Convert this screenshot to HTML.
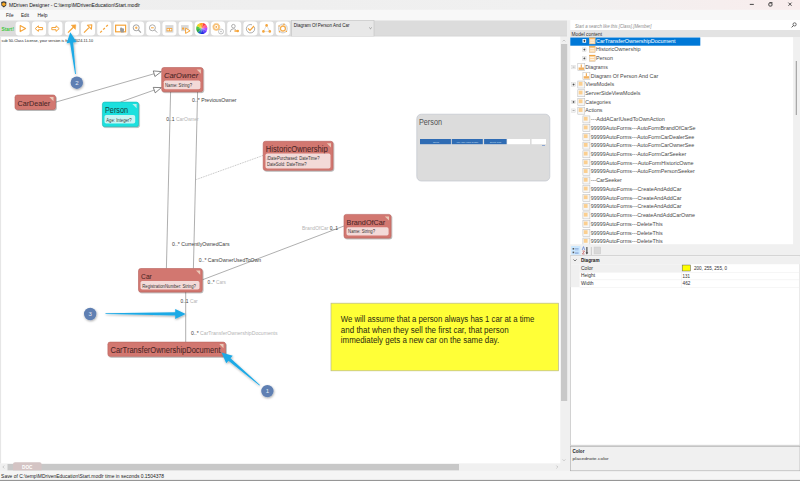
<!DOCTYPE html>
<html><head><meta charset="utf-8"><title>MDriven Designer</title>
<style>html,body{margin:0;padding:0;width:800px;height:481px;overflow:hidden;background:#f0f0f0;font-family:"Liberation Sans", sans-serif;}</style>
</head><body>
<svg width="800" height="481" viewBox="0 0 800 481" style="display:block;font-family:'Liberation Sans', sans-serif"><defs><linearGradient id="tg" x1="0" x2="1" y1="0" y2="0"><stop offset="0" stop-color="#eeeeee"/><stop offset="0.7" stop-color="#f0f0f0"/><stop offset="1" stop-color="#f9eded"/></linearGradient><filter id="sh" x="-20%" y="-20%" width="150%" height="160%"><feDropShadow dx="0.8" dy="1" stdDeviation="0.7" flood-color="#000" flood-opacity="0.35"/></filter><filter id="sh2" x="-50%" y="-50%" width="200%" height="200%"><feDropShadow dx="0.5" dy="1" stdDeviation="0.8" flood-color="#000" flood-opacity="0.35"/></filter><radialGradient id="cw" cx="0.5" cy="0.5" r="0.5"><stop offset="0" stop-color="#fff" stop-opacity="0.35"/><stop offset="1" stop-color="#fff" stop-opacity="0"/></radialGradient></defs>
<rect x="0" y="0" width="800" height="481" fill="#f0f0f0"/>
<rect x="0" y="0" width="800" height="10" fill="url(#tg)"/>
<rect x="0" y="9.8" width="800" height="10.4" fill="#f8f8f8"/>
<path d="M1.2 2 L3.8 1.2 L6.4 2 L6.2 5.5 L3.8 7.6 L1.4 5.5 Z" fill="#3a3a3a"/><circle cx="3.8" cy="4.2" r="1.8" fill="#f5a623"/>
<text x="9" y="7.3" font-size="5.4" fill="#101010" textLength="131" lengthAdjust="spacingAndGlyphs" >MDriven Designer - C:\temp\MDrivenEducation\Start.modlr</text>
<rect x="749.8" y="3.9" width="4" height="0.9" fill="#333"/>
<rect x="768.8" y="2.9" width="3.2" height="3.2" fill="none" stroke="#333" stroke-width="0.9" rx="1"/><rect x="769.6" y="2.3" width="2.9" height="0.8" fill="#333"/>
<path d="M788.4 2.6 L791.6 5.8 M791.6 2.6 L788.4 5.8" stroke="#333" stroke-width="0.85"/>
<text x="6" y="16.5" font-size="5" fill="#202020" textLength="7.5" lengthAdjust="spacingAndGlyphs" >File</text>
<text x="21" y="16.5" font-size="5" fill="#202020" textLength="8" lengthAdjust="spacingAndGlyphs" >Edit</text>
<text x="37.5" y="16.5" font-size="5" fill="#202020" textLength="10" lengthAdjust="spacingAndGlyphs" >Help</text>
<rect x="0" y="20.6" width="567" height="16" fill="#dcdcdc"/><rect x="0" y="35.4" width="567" height="1.2" fill="#d8d8d8"/>
<text x="1.5" y="30.6" font-size="4.6" fill="#3cc83c" textLength="12.5" lengthAdjust="spacingAndGlyphs" font-weight="bold">Start!</text>
<rect x="15.6" y="21.6" width="14" height="13.8" rx="3" fill="#ffffff"/>
<rect x="32" y="21.6" width="14" height="13.8" rx="3" fill="#ffffff"/>
<rect x="48.4" y="21.6" width="14" height="13.8" rx="3" fill="#ffffff"/>
<rect x="65" y="21.6" width="14" height="13.8" rx="3" fill="#ffffff"/>
<rect x="81" y="21.6" width="14" height="13.8" rx="3" fill="#ffffff"/>
<rect x="97.2" y="21.6" width="14" height="13.8" rx="3" fill="#ffffff"/>
<rect x="113.6" y="21.6" width="14" height="13.8" rx="3" fill="#ffffff"/>
<rect x="130" y="21.6" width="14" height="13.8" rx="3" fill="#ffffff"/>
<rect x="146.2" y="21.6" width="14" height="13.8" rx="3" fill="#ffffff"/>
<rect x="162.4" y="21.6" width="14" height="13.8" rx="3" fill="#ffffff"/>
<rect x="178.6" y="21.6" width="14" height="13.8" rx="3" fill="#ffffff"/>
<rect x="194.8" y="21.6" width="14" height="13.8" rx="3" fill="#ffffff"/>
<rect x="211" y="21.6" width="14" height="13.8" rx="3" fill="#ffffff"/>
<rect x="227.2" y="21.6" width="14" height="13.8" rx="3" fill="#ffffff"/>
<rect x="243.4" y="21.6" width="14" height="13.8" rx="3" fill="#ffffff"/>
<rect x="259.6" y="21.6" width="14" height="13.8" rx="3" fill="#ffffff"/>
<rect x="275.8" y="21.6" width="14" height="13.8" rx="3" fill="#ffffff"/>
<g transform="translate(15.6,21.6)"><path d="M4.6 4 L10 7 L4.6 10 Z" fill="none" stroke="#f5a43a" stroke-width="1.1" stroke-linejoin="round"/></g>
<g transform="translate(32,21.6)"><path d="M3.2 7 L6.4 4.2 L6.4 5.9 L10.6 5.9 L10.6 8.1 L6.4 8.1 L6.4 9.8 Z" fill="none" stroke="#f5a43a" stroke-width="1" stroke-linejoin="round"/></g>
<g transform="translate(48.4,21.6)"><path d="M10.8 7 L7.6 4.2 L7.6 5.9 L3.4 5.9 L3.4 8.1 L7.6 8.1 L7.6 9.8 Z" fill="none" stroke="#f5a43a" stroke-width="1" stroke-linejoin="round"/></g>
<g transform="translate(65,21.6)"><path d="M3 11 L8.6 5.4" stroke="#f5a43a" stroke-width="1.2"/><path d="M6.2 3.6 L10.8 3.2 L10.4 7.8 Z" fill="#f5a43a" stroke="#f5a43a" stroke-width="0.5" stroke-linejoin="round"/></g>
<g transform="translate(81,21.6)"><path d="M3 11 L8 6" stroke="#f5a43a" stroke-width="1.2"/><path d="M6.4 3.6 L10.8 3.2 L10.4 7.6 Z" fill="#fff" stroke="#f5a43a" stroke-width="1.1" stroke-linejoin="round"/></g>
<g transform="translate(97.2,21.6)"><path d="M3 11 L11 3" stroke="#f5a43a" stroke-width="1.3" stroke-dasharray="2.4 1.8"/></g>
<g transform="translate(113.6,21.6)"><rect x="2" y="3.6" width="10" height="6.6" fill="none" stroke="#f5a43a" stroke-width="1.2"/><path d="M6.6 6.4 L7.6 5.6 L8.4 6.6 L9.8 6.6 L10.4 7.6 L10.2 10.8 L7.4 10.8 L6.4 8.6 Z" fill="#9a9a9a"/></g>
<g transform="translate(130,21.6)"><circle cx="6.2" cy="6.2" r="3" fill="none" stroke="#a4a4a4" stroke-width="1"/><path d="M8.4 8.4 L11 11" stroke="#a4a4a4" stroke-width="1.1"/><rect x="4.9" y="5.8" width="2.6" height="0.9" fill="#f5a43a"/><rect x="5.75" y="4.9" width="0.9" height="2.6" fill="#f5a43a"/></g>
<g transform="translate(146.2,21.6)"><circle cx="6.2" cy="6.2" r="3" fill="none" stroke="#a4a4a4" stroke-width="0.9"/><path d="M8.4 8.4 L11 11" stroke="#a4a4a4" stroke-width="1"/><rect x="4.8" y="5.7" width="2.8" height="1" fill="#f5a43a"/></g>
<g transform="translate(162.4,21.6)"><rect x="3" y="3.5" width="8" height="7.5" fill="#d8d8d8"/><rect x="4.2" y="6.5" width="5.6" height="3.2" fill="#f5a43a"/><rect x="5" y="7.3" width="1.5" height="1.5" fill="#fff"/><rect x="7.5" y="7.3" width="1.5" height="1.5" fill="#fff"/></g>
<g transform="translate(178.6,21.6)"><rect x="2.5" y="3.5" width="7.5" height="6" fill="#d8d8d8"/><rect x="3.5" y="6" width="2" height="2" fill="#f5a43a"/><path d="M7 6.5 L11.5 9.2 L7 11.8 Z" fill="#fff" stroke="#f5a43a" stroke-width="1"/></g>
<g transform="translate(194.8,21.6)"><path d="M7 6.9 L7.84 1.36 A5.6 5.6 0 0 1 11.01 2.99 Z" fill="#ff3030"/><path d="M7 6.9 L10.93 2.91 A5.6 5.6 0 0 1 12.54 6.10 Z" fill="#ff4a8a"/><path d="M7 6.9 L12.52 5.98 A5.6 5.6 0 0 1 11.96 9.51 Z" fill="#b040ff"/><path d="M7 6.9 L12.01 9.41 A5.6 5.6 0 0 1 9.48 11.92 Z" fill="#5a30ff"/><path d="M7 6.9 L9.58 11.87 A5.6 5.6 0 0 1 6.05 12.42 Z" fill="#1a20e0"/><path d="M7 6.9 L6.16 12.44 A5.6 5.6 0 0 1 2.99 10.81 Z" fill="#1060c0"/><path d="M7 6.9 L3.07 10.89 A5.6 5.6 0 0 1 1.46 7.70 Z" fill="#18a040"/><path d="M7 6.9 L1.48 7.82 A5.6 5.6 0 0 1 2.04 4.29 Z" fill="#40c030"/><path d="M7 6.9 L1.99 4.39 A5.6 5.6 0 0 1 4.52 1.88 Z" fill="#f0d010"/><path d="M7 6.9 L4.42 1.93 A5.6 5.6 0 0 1 7.95 1.38 Z" fill="#ff9a10"/><circle cx="7" cy="6.9" r="5.6" fill="url(#cw)"/></g>
<g transform="translate(211,21.6)"><circle cx="5.3" cy="5.3" r="3.5" fill="#f7c27a" stroke="#f7c27a" stroke-width="0.8" stroke-dasharray="1 0.5"/><circle cx="5.3" cy="5.3" r="1.9" fill="#fff"/><circle cx="5.3" cy="5.3" r="0.9" fill="#f5a43a"/><circle cx="10" cy="9.9" r="2.5" fill="#fff" stroke="#b4b4b4" stroke-width="0.8"/><circle cx="10" cy="9.9" r="0.8" fill="#b4b4b4"/></g>
<g transform="translate(227.2,21.6)"><circle cx="6.2" cy="4.6" r="1.8" fill="none" stroke="#a4a4a4" stroke-width="0.9"/><path d="M3 10.5 Q3.2 7.2 6.2 7.2 Q8 7.2 8.6 8.2" fill="none" stroke="#a4a4a4" stroke-width="0.9"/><rect x="7" y="8.6" width="4" height="1.6" rx="0.8" fill="#f5a43a"/><circle cx="10.6" cy="9.4" r="1.2" fill="#f5a43a"/></g>
<g transform="translate(243.4,21.6)"><path d="M11 5.5 A4.2 4.2 0 1 1 8.6 3.2" fill="none" stroke="#a4a4a4" stroke-width="0.9"/><path d="M4.6 6.8 L6.6 8.8 L10.6 4.4" fill="none" stroke="#f5a43a" stroke-width="1.2"/></g>
<g transform="translate(259.6,21.6)"><path d="M7 3.8 L3.8 9.8 L10.2 9.8 Z" fill="none" stroke="#cccccc" stroke-width="0.6"/><circle cx="7" cy="3.8" r="1.3" fill="#f5a43a"/><circle cx="3.8" cy="9.8" r="1.3" fill="#f5a43a"/><circle cx="10.2" cy="9.8" r="1.3" fill="#f5a43a"/></g>
<g transform="translate(275.8,21.6)"><circle cx="7.1" cy="6.9" r="4.3" fill="none" stroke="#d4d4d4" stroke-width="1.3"/><circle cx="7.1" cy="6.9" r="2.5" fill="none" stroke="#f5a43a" stroke-width="1.3" opacity="0.9"/><circle cx="8.2" cy="2.6" r="0.8" fill="#f5a43a"/><circle cx="3.2" cy="4.4" r="0.7" fill="#f5a43a"/><circle cx="3.6" cy="10.2" r="0.7" fill="#f5a43a"/><circle cx="10.6" cy="9.8" r="0.7" fill="#f5a43a"/></g>
<rect x="291.5" y="20.5" width="82.5" height="16" fill="#e8e8e8" stroke="#c4c4c4" stroke-width="0.6"/>
<text x="293.8" y="27.2" font-size="4.5" fill="#222" textLength="55.6" lengthAdjust="spacingAndGlyphs" >Diagram Of Person And Car</text>
<path d="M369.3 27.6 L370.5 28.7 L371.7 27.6" fill="none" stroke="#444" stroke-width="0.5"/>
<rect x="0" y="36.6" width="560.5" height="427" fill="#ffffff"/>
<rect x="0" y="36.6" width="1.1" height="427" fill="#e6e6e6"/>
<text x="1.5" y="41.8" font-size="4.2" fill="#222" textLength="91.5" lengthAdjust="spacingAndGlyphs" >sub 50-Class License, your version is from 2024-11-10</text>
<g stroke="#8c8c8c" stroke-width="0.7" fill="none">
<line x1="55.5" y1="102.2" x2="154" y2="73.8"/>
<line x1="120.5" y1="102" x2="154.4" y2="90"/>
<line x1="170.6" y1="91.8" x2="166.4" y2="268.5"/>
<line x1="197.6" y1="91.8" x2="193.4" y2="268.5"/>
<line x1="263" y1="155.5" x2="196.3" y2="179.5" stroke="#a8a8a8" stroke-dasharray="1 0.8"/>
<line x1="202.4" y1="279.8" x2="344" y2="226"/>
<line x1="185.7" y1="292" x2="185.7" y2="342"/>
</g>
<path d="M161.4 71.6 L154.90 76.50 L153.29 70.92 Z" fill="#fff" stroke="#505050" stroke-width="0.7" stroke-linejoin="miter"/>
<path d="M161.4 87.6 L155.19 92.86 L153.27 87.39 Z" fill="#fff" stroke="#505050" stroke-width="0.7" stroke-linejoin="miter"/>
<g><rect x="161.7" y="67.5" width="41.20" height="24.20" rx="2.2" fill="#d27770" stroke="#b8625c" stroke-width="0.6" filter="url(#sh)"/><path d="M196.70 69.5 L200.90 69.5 L200.90 73.70 Z" fill="#ebc9b8"/><text x="164.0" y="78.3" font-size="8.0" fill="#4a2626" textLength="34.2" lengthAdjust="spacingAndGlyphs" font-style="italic" stroke="#4a2626" stroke-width="0.06">CarOwner</text><rect x="163.8" y="80.4" width="36.60" height="8.80" rx="1.8" fill="#f3dad8"/><text x="165" y="86.7" font-size="4.9" fill="#333333" textLength="27" lengthAdjust="spacingAndGlyphs" >Name: String?</text></g>
<g><rect x="102.4" y="102.1" width="36.20" height="24.50" rx="2.2" fill="#1fe0de" stroke="#16b8b6" stroke-width="0.6" filter="url(#sh)"/><path d="M132.40 104.1 L136.60 104.1 L136.60 108.30 Z" fill="#b8f0ee"/><text x="105.0" y="113" font-size="8.2" fill="#1a4848" textLength="23.1" lengthAdjust="spacingAndGlyphs"  stroke="#1a4848" stroke-width="0.06">Person</text><rect x="104.5" y="115" width="30.70" height="8.60" rx="1.8" fill="#c8f4f3"/><text x="106.3" y="121.5" font-size="4.9" fill="#333333" textLength="25.3" lengthAdjust="spacingAndGlyphs" >Age: Integer?</text></g>
<g><rect x="15" y="95" width="40.50" height="14.50" rx="2.2" fill="#d27770" stroke="#b8625c" stroke-width="0.6" filter="url(#sh)"/><path d="M49.30 97 L53.50 97 L53.50 101.20 Z" fill="#ebc9b8"/><text x="17.6" y="105.5" font-size="8.1" fill="#4a2626" textLength="32.5" lengthAdjust="spacingAndGlyphs"  stroke="#4a2626" stroke-width="0.06">CarDealer</text></g>
<g><rect x="263.2" y="141.3" width="69.80" height="29.00" rx="2.2" fill="#d27770" stroke="#b8625c" stroke-width="0.6" filter="url(#sh)"/><path d="M326.80 143.3 L331.00 143.3 L331.00 147.50 Z" fill="#ebc9b8"/><text x="265.8" y="152.1" font-size="8.6" fill="#4a2626" textLength="61.9" lengthAdjust="spacingAndGlyphs"  stroke="#4a2626" stroke-width="0.06">HistoricOwnership</text><rect x="265.5" y="153.5" width="65.00" height="15.00" rx="1.8" fill="#f3dad8"/><text x="266.9" y="160.3" font-size="4.9" fill="#333333" textLength="52.6" lengthAdjust="spacingAndGlyphs" >/DatePurchased: DateTime?</text><text x="266.9" y="166.0" font-size="4.9" fill="#333333" textLength="39.8" lengthAdjust="spacingAndGlyphs" >DateSold: DateTime?</text></g>
<g><rect x="344" y="214.4" width="47.00" height="23.70" rx="2.2" fill="#d27770" stroke="#b8625c" stroke-width="0.6" filter="url(#sh)"/><path d="M384.80 216.4 L389.00 216.4 L389.00 220.60 Z" fill="#ebc9b8"/><text x="346.6" y="225.3" font-size="8.0" fill="#4a2626" textLength="38.6" lengthAdjust="spacingAndGlyphs"  stroke="#4a2626" stroke-width="0.06">BrandOfCar</text><rect x="346.5" y="227.2" width="42.10" height="8.40" rx="1.8" fill="#f3dad8"/><text x="348.1" y="232.8" font-size="4.9" fill="#333333" textLength="26.9" lengthAdjust="spacingAndGlyphs" >Name: String?</text></g>
<g><rect x="138.5" y="268.5" width="63.70" height="23.50" rx="2.2" fill="#d27770" stroke="#b8625c" stroke-width="0.6" filter="url(#sh)"/><path d="M196.00 270.5 L200.20 270.5 L200.20 274.70 Z" fill="#ebc9b8"/><text x="141.1" y="279" font-size="7.9" fill="#4a2626" textLength="10.7" lengthAdjust="spacingAndGlyphs"  stroke="#4a2626" stroke-width="0.06">Car</text><rect x="140.5" y="281" width="59.00" height="8.50" rx="1.8" fill="#f3dad8"/><text x="142.2" y="287.5" font-size="4.9" fill="#333333" textLength="53.8" lengthAdjust="spacingAndGlyphs" >RegistrationNumber: String?</text></g>
<g><rect x="107.9" y="342.1" width="117.60" height="14.20" rx="2.2" fill="#d27770" stroke="#b8625c" stroke-width="0.6" filter="url(#sh)"/><path d="M219.30 344.1 L223.50 344.1 L223.50 348.30 Z" fill="#ebc9b8"/><text x="110.5" y="352.6" font-size="8.3" fill="#4a2626" textLength="110" lengthAdjust="spacingAndGlyphs"  stroke="#4a2626" stroke-width="0.06">CarTransferOwnershipDocument</text></g>
<text x="192" y="102" font-size="5" textLength="44.5" lengthAdjust="spacingAndGlyphs"><tspan fill="#3a3a3a">0..* </tspan><tspan fill="#3a3a3a">PreviousOwner</tspan></text>
<text x="166.2" y="121" font-size="5" textLength="32.6" lengthAdjust="spacingAndGlyphs"><tspan fill="#3a3a3a">0..1 </tspan><tspan fill="#b4b4b4">CarOwner</tspan></text>
<text x="172.1" y="246.2" font-size="5" textLength="57.4" lengthAdjust="spacingAndGlyphs"><tspan fill="#3a3a3a">0..* </tspan><tspan fill="#3a3a3a">CurrentlyOwnedCars</tspan></text>
<text x="198.8" y="262" font-size="5" textLength="62.2" lengthAdjust="spacingAndGlyphs"><tspan fill="#3a3a3a">0..* </tspan><tspan fill="#3a3a3a">CarsOwnerUsedToOwn</tspan></text>
<text x="207.5" y="284.3" font-size="5" textLength="18.5" lengthAdjust="spacingAndGlyphs"><tspan fill="#3a3a3a">0..* </tspan><tspan fill="#b4b4b4">Cars</tspan></text>
<text x="302" y="229.9" font-size="5" textLength="36" lengthAdjust="spacingAndGlyphs"><tspan fill="#b4b4b4">BrandOfCar </tspan><tspan fill="#3a3a3a">0..1</tspan></text>
<text x="180.5" y="302.5" font-size="5" textLength="17.2" lengthAdjust="spacingAndGlyphs"><tspan fill="#3a3a3a">0..1 </tspan><tspan fill="#b4b4b4">Car</tspan></text>
<text x="191" y="335.2" font-size="5" textLength="86.6" lengthAdjust="spacingAndGlyphs"><tspan fill="#3a3a3a">0..* </tspan><tspan fill="#b4b4b4">CarTransferOwnershipDocuments</tspan></text>
<rect x="416.8" y="114.2" width="133" height="66.8" rx="4.5" fill="#dcdcdc" stroke="#c2c6cf" stroke-width="0.7"/>
<text x="419" y="124.9" font-size="8.2" fill="#505050" textLength="23" lengthAdjust="spacingAndGlyphs" >Person</text>
<rect x="420" y="139" width="30.90" height="5.2" fill="#2f6cb4"/>
<rect x="451.8" y="139" width="31.00" height="5.2" fill="#2f6cb4"/>
<rect x="484.1" y="139" width="22.50" height="5.2" fill="#2f6cb4"/>
<rect x="507.2" y="139" width="22.8" height="5.2" fill="#fff"/>
<rect x="531.6" y="139" width="14.4" height="5.2" fill="#fff"/>
<text x="433" y="142.6" font-size="1.8" fill="#cfe0f5" textLength="6" lengthAdjust="spacingAndGlyphs" >Seek</text>
<text x="456" y="142.6" font-size="1.8" fill="#cfe0f5" textLength="22" lengthAdjust="spacingAndGlyphs" >Add A Car I Used To Own</text>
<text x="490" y="142.6" font-size="1.8" fill="#cfe0f5" textLength="11" lengthAdjust="spacingAndGlyphs" >Delete This</text>
<rect x="542" y="145.2" width="3" height="0.8" fill="#7a9ad0"/>
<rect x="331" y="303.2" width="227.4" height="67.6" fill="#ffff37" stroke="#b9b98a" stroke-width="0.7"/>
<text x="340.8" y="322" font-size="8.3" fill="#2a2a10" textLength="193.6" lengthAdjust="spacingAndGlyphs" >We will assume that a person always has 1 car at a time</text>
<text x="340.8" y="332.5" font-size="8.3" fill="#2a2a10" textLength="167.8" lengthAdjust="spacingAndGlyphs" >and that when they sell the first car, that person</text>
<text x="340.8" y="343.1" font-size="8.3" fill="#2a2a10" textLength="158.4" lengthAdjust="spacingAndGlyphs" >immediately gets a new car on the same day.</text>
<path d="M75.90 73.95 L73.18 42.42 L76.56 42.00 L70.30 32.20 L66.63 43.24 L70.01 42.82 L75.10 74.05 Z" fill="#1eaae6" filter="url(#sh2)"/>
<path d="M105.50 314.10 L175.19 315.56 L175.18 318.96 L185.70 314.00 L175.22 308.96 L175.21 312.36 L105.50 313.30 Z" fill="#1eaae6" filter="url(#sh2)"/>
<path d="M259.96 385.00 L230.52 358.21 L232.73 355.63 L221.50 352.60 L226.23 363.23 L228.44 360.64 L259.44 385.60 Z" fill="#1eaae6" filter="url(#sh2)"/>
<circle cx="76.8" cy="82.7" r="6.2" fill="#5e7fb2" filter="url(#sh2)"/>
<text x="75.2" y="84.9" font-size="6.2" fill="#e4eaf4" textLength="3.4" lengthAdjust="spacingAndGlyphs" >2</text>
<circle cx="90.2" cy="314" r="6.2" fill="#5e7fb2" filter="url(#sh2)"/>
<text x="88.60000000000001" y="316.2" font-size="6.2" fill="#e4eaf4" textLength="3.4" lengthAdjust="spacingAndGlyphs" >3</text>
<circle cx="267.4" cy="391.1" r="6.2" fill="#5e7fb2" filter="url(#sh2)"/>
<text x="265.79999999999995" y="393.3" font-size="6.2" fill="#e4eaf4" textLength="3.4" lengthAdjust="spacingAndGlyphs" >1</text>
<rect x="560.5" y="36.6" width="7" height="427.2" fill="#f0f0f0"/>
<rect x="561" y="44" width="6.2" height="357" fill="#c8c8c8"/>
<path d="M562.6 41.4 L564 40 L565.4 41.4" fill="none" stroke="#a0a0a0" stroke-width="0.5"/>
<path d="M562.6 459.4 L564 460.8 L565.4 459.4" fill="none" stroke="#a0a0a0" stroke-width="0.5"/>
<rect x="0" y="463.6" width="560.5" height="7" fill="#f0f0f0"/>
<rect x="7.5" y="464" width="451.5" height="6.4" fill="#c8c8c8"/>
<path d="M4.2 465.6 L2.8 467 L4.2 468.4" fill="none" stroke="#a0a0a0" stroke-width="0.5"/>
<path d="M556.4 465.6 L557.8 467 L556.4 468.4" fill="none" stroke="#a0a0a0" stroke-width="0.5"/>
<path d="M13 470.4 L13 464.2 Q13 462.2 15 462.2 L39.6 462.2 Q41.6 462.2 41.6 464.2 L41.6 470.4 Z" fill="#d4c4c4"/>
<text x="22" y="468.7" font-size="4.8" fill="#ffffff" textLength="10.4" lengthAdjust="spacingAndGlyphs" font-weight="bold">DOC</text>
<rect x="0" y="470.8" width="800" height="9.2" fill="#f5f5f5"/>
<text x="1.1" y="477.6" font-size="4.9" fill="#202020" textLength="163" lengthAdjust="spacingAndGlyphs" >Save of C:\temp\MDrivenEducation\Start.modlr time in seconds 0.1504378</text>
<rect x="0" y="479.9" width="800" height="1.1" fill="#969696"/>
<rect x="570.3" y="20" width="229.7" height="10" fill="#ffffff"/>
<text x="574.9" y="27.6" font-size="4.8" fill="#8c8c8c" textLength="76.6" lengthAdjust="spacingAndGlyphs" font-style="italic">Start a search like this [Class].[Member]</text>
<circle cx="794.6" cy="24.4" r="1.6" fill="none" stroke="#333" stroke-width="0.7"/><path d="M793.4 25.6 L791.6 27.4" stroke="#333" stroke-width="0.8"/>
<rect x="570.3" y="30" width="229.7" height="7.2" fill="#e3e3e3"/>
<text x="571.5" y="35.5" font-size="4.85" fill="#303030" textLength="30.5" lengthAdjust="spacingAndGlyphs" >Model content</text>
<rect x="570.3" y="37.2" width="222.9" height="207" fill="#ffffff"/>
<rect x="793.2" y="37.2" width="6.8" height="207" fill="#f0f0f0"/>
<rect x="795.8" y="61" width="0.9" height="54" fill="#8a8a8a"/>
<rect x="570.3" y="37.5" width="130" height="8.2" fill="#0078d7"/>
<g>
<clipPath id="treeclip"><rect x="570.3" y="37.2" width="222.9" height="207"/></clipPath>
<g clip-path="url(#treeclip)">
<rect x="582.50" y="39.10" width="3.6" height="3.6" fill="#fff"/><rect x="583.20" y="40.60" width="2.2" height="0.6" fill="#000"/><rect x="584.00" y="39.80" width="0.6" height="2.2" fill="#000"/>
<rect x="589.2" y="37.60" width="6" height="6.4" fill="#fbd7a6" stroke="#c8b8a8" stroke-width="0.4"/><rect x="589.2" y="37.60" width="6" height="1" fill="#f2a23c"/><rect x="590.20" y="39.70" width="4" height="0.7" fill="#fff"/><rect x="590.20" y="41.80" width="4" height="0.7" fill="#fff"/>
<text x="596" y="42.6" font-size="6.1" fill="#ffffff" textLength="79.6" lengthAdjust="spacingAndGlyphs" >CarTransferOwnershipDocument</text>
<rect x="582.50" y="47.83" width="3.6" height="3.6" fill="#ececec" stroke="#d0d0d0" stroke-width="0.4"/><rect x="583.30" y="49.33" width="2" height="0.6" fill="#333"/><rect x="584.00" y="48.62" width="0.6" height="2" fill="#333"/>
<rect x="589.2" y="46.33" width="6" height="6.4" fill="#fbd7a6" stroke="#c8b8a8" stroke-width="0.4"/><rect x="589.2" y="46.33" width="6" height="1" fill="#f2a23c"/><rect x="590.20" y="48.42" width="4" height="0.7" fill="#fff"/><rect x="590.20" y="50.52" width="4" height="0.7" fill="#fff"/>
<text x="596" y="51.325" font-size="6.1" fill="#484848" textLength="44.5" lengthAdjust="spacingAndGlyphs" >HistoricOwnership</text>
<rect x="582.50" y="56.55" width="3.6" height="3.6" fill="#ececec" stroke="#d0d0d0" stroke-width="0.4"/><rect x="583.30" y="58.05" width="2" height="0.6" fill="#333"/><rect x="584.00" y="57.35" width="0.6" height="2" fill="#333"/>
<rect x="589.2" y="55.05" width="6" height="6.4" fill="#fbd7a6" stroke="#c8b8a8" stroke-width="0.4"/><rect x="589.2" y="55.05" width="6" height="1" fill="#f2a23c"/><rect x="590.20" y="57.15" width="4" height="0.7" fill="#fff"/><rect x="590.20" y="59.25" width="4" height="0.7" fill="#fff"/>
<text x="596" y="60.05" font-size="6.1" fill="#484848" textLength="17" lengthAdjust="spacingAndGlyphs" >Person</text>
<rect x="571.80" y="65.27" width="3.6" height="3.6" fill="#f2f2f2" stroke="#d4d4d4" stroke-width="0.4"/><rect x="572.60" y="66.77" width="2" height="0.6" fill="#888"/>
<rect x="577.8" y="63.57" width="7" height="7" fill="#fff" stroke="#b8b8b8" stroke-width="0.5"/><rect x="578.60" y="67.47" width="5.4" height="2.4" fill="#f2b060"/><rect x="580.70" y="64.47" width="1.2" height="3.2" fill="#f2b060"/>
<text x="585.3" y="68.77499999999999" font-size="6.1" fill="#484848" textLength="22.5" lengthAdjust="spacingAndGlyphs" >Diagrams</text>
<rect x="582.9" y="72.30" width="7" height="7" fill="#fff" stroke="#b8b8b8" stroke-width="0.5"/><rect x="583.70" y="76.20" width="5.4" height="2.4" fill="#f2b060"/><rect x="585.80" y="73.20" width="1.2" height="3.2" fill="#f2b060"/>
<text x="590.8" y="77.5" font-size="6.1" fill="#484848" textLength="67.5" lengthAdjust="spacingAndGlyphs" >Diagram Of Person And Car</text>
<rect x="571.80" y="82.73" width="3.6" height="3.6" fill="#ececec" stroke="#d0d0d0" stroke-width="0.4"/><rect x="572.60" y="84.23" width="2" height="0.6" fill="#333"/><rect x="573.30" y="83.53" width="0.6" height="2" fill="#333"/>
<rect x="577.8" y="81.03" width="7" height="7" fill="#f6f6f6" stroke="#b8b8b8" stroke-width="0.5"/><rect x="578.70" y="81.93" width="3.8" height="3.8" fill="#fbcf90"/>
<text x="585.3" y="86.22500000000001" font-size="6.1" fill="#484848" textLength="28.9" lengthAdjust="spacingAndGlyphs" >ViewModels</text>
<rect x="577.8" y="89.75" width="7" height="7" fill="#f6f6f6" stroke="#b8b8b8" stroke-width="0.5"/><rect x="578.70" y="90.65" width="3.8" height="3.8" fill="#fbcf90"/>
<text x="585.3" y="94.95" font-size="6.1" fill="#484848" textLength="55" lengthAdjust="spacingAndGlyphs" >ServerSideViewModels</text>
<rect x="571.80" y="100.17" width="3.6" height="3.6" fill="#ececec" stroke="#d0d0d0" stroke-width="0.4"/><rect x="572.60" y="101.67" width="2" height="0.6" fill="#333"/><rect x="573.30" y="100.97" width="0.6" height="2" fill="#333"/>
<rect x="577.8" y="98.47" width="7" height="7" fill="#f6f6f6" stroke="#b8b8b8" stroke-width="0.5"/><rect x="578.70" y="99.38" width="3.8" height="3.8" fill="#fbcf90"/>
<text x="585.3" y="103.675" font-size="6.1" fill="#484848" textLength="25.5" lengthAdjust="spacingAndGlyphs" >Categories</text>
<rect x="571.80" y="108.90" width="3.6" height="3.6" fill="#f2f2f2" stroke="#d4d4d4" stroke-width="0.4"/><rect x="572.60" y="110.40" width="2" height="0.6" fill="#888"/>
<rect x="577.8" y="107.20" width="7" height="7" fill="#f6f6f6" stroke="#b8b8b8" stroke-width="0.5"/><rect x="578.70" y="108.10" width="3.8" height="3.8" fill="#fbcf90"/>
<text x="585.3" y="112.39999999999999" font-size="6.1" fill="#484848" textLength="17.1" lengthAdjust="spacingAndGlyphs" >Actions</text>
<rect x="582.9" y="115.92" width="7" height="7" fill="#f6f6f6" stroke="#b8b8b8" stroke-width="0.5"/><rect x="583.80" y="116.82" width="3.8" height="3.8" fill="#fbcf90"/>
<text x="590.8" y="121.12499999999999" font-size="6.1" fill="#484848" textLength="74" lengthAdjust="spacingAndGlyphs" >---AddACarIUsedToOwnAction</text>
<rect x="582.9" y="124.65" width="7" height="7" fill="#f6f6f6" stroke="#b8b8b8" stroke-width="0.5"/><rect x="583.80" y="125.55" width="3.8" height="3.8" fill="#fbcf90"/>
<text x="590.8" y="129.85" font-size="6.1" fill="#484848" textLength="104.8" lengthAdjust="spacingAndGlyphs" >99999AutoForms---AutoFormBrandOfCarSe</text>
<rect x="582.9" y="133.38" width="7" height="7" fill="#f6f6f6" stroke="#b8b8b8" stroke-width="0.5"/><rect x="583.80" y="134.28" width="3.8" height="3.8" fill="#fbcf90"/>
<text x="590.8" y="138.575" font-size="6.1" fill="#484848" textLength="103.5" lengthAdjust="spacingAndGlyphs" >99999AutoForms---AutoFormCarDealerSee</text>
<rect x="582.9" y="142.10" width="7" height="7" fill="#f6f6f6" stroke="#b8b8b8" stroke-width="0.5"/><rect x="583.80" y="143.00" width="3.8" height="3.8" fill="#fbcf90"/>
<text x="590.8" y="147.29999999999998" font-size="6.1" fill="#484848" textLength="103.5" lengthAdjust="spacingAndGlyphs" >99999AutoForms---AutoFormCarOwnerSee</text>
<rect x="582.9" y="150.82" width="7" height="7" fill="#f6f6f6" stroke="#b8b8b8" stroke-width="0.5"/><rect x="583.80" y="151.72" width="3.8" height="3.8" fill="#fbcf90"/>
<text x="590.8" y="156.02499999999998" font-size="6.1" fill="#484848" textLength="95.4" lengthAdjust="spacingAndGlyphs" >99999AutoForms---AutoFormCarSeeker</text>
<rect x="582.9" y="159.55" width="7" height="7" fill="#f6f6f6" stroke="#b8b8b8" stroke-width="0.5"/><rect x="583.80" y="160.45" width="3.8" height="3.8" fill="#fbcf90"/>
<text x="590.8" y="164.74999999999997" font-size="6.1" fill="#484848" textLength="102.7" lengthAdjust="spacingAndGlyphs" >99999AutoForms---AutoFormHistoricOwne</text>
<rect x="582.9" y="168.28" width="7" height="7" fill="#f6f6f6" stroke="#b8b8b8" stroke-width="0.5"/><rect x="583.80" y="169.18" width="3.8" height="3.8" fill="#fbcf90"/>
<text x="590.8" y="173.475" font-size="6.1" fill="#484848" textLength="103.9" lengthAdjust="spacingAndGlyphs" >99999AutoForms---AutoFormPersonSeeker</text>
<rect x="582.9" y="177.00" width="7" height="7" fill="#f6f6f6" stroke="#b8b8b8" stroke-width="0.5"/><rect x="583.80" y="177.90" width="3.8" height="3.8" fill="#fbcf90"/>
<text x="590.8" y="182.2" font-size="6.1" fill="#484848" textLength="30.9" lengthAdjust="spacingAndGlyphs" >---CarSeeker</text>
<rect x="582.9" y="185.72" width="7" height="7" fill="#f6f6f6" stroke="#b8b8b8" stroke-width="0.5"/><rect x="583.80" y="186.62" width="3.8" height="3.8" fill="#fbcf90"/>
<text x="590.8" y="190.92499999999998" font-size="6.1" fill="#484848" textLength="90.7" lengthAdjust="spacingAndGlyphs" >99999AutoForms---CreateAndAddCar</text>
<rect x="582.9" y="194.45" width="7" height="7" fill="#f6f6f6" stroke="#b8b8b8" stroke-width="0.5"/><rect x="583.80" y="195.35" width="3.8" height="3.8" fill="#fbcf90"/>
<text x="590.8" y="199.64999999999998" font-size="6.1" fill="#484848" textLength="90.7" lengthAdjust="spacingAndGlyphs" >99999AutoForms---CreateAndAddCar</text>
<rect x="582.9" y="203.18" width="7" height="7" fill="#f6f6f6" stroke="#b8b8b8" stroke-width="0.5"/><rect x="583.80" y="204.08" width="3.8" height="3.8" fill="#fbcf90"/>
<text x="590.8" y="208.375" font-size="6.1" fill="#484848" textLength="90.7" lengthAdjust="spacingAndGlyphs" >99999AutoForms---CreateAndAddCar</text>
<rect x="582.9" y="211.90" width="7" height="7" fill="#f6f6f6" stroke="#b8b8b8" stroke-width="0.5"/><rect x="583.80" y="212.80" width="3.8" height="3.8" fill="#fbcf90"/>
<text x="590.8" y="217.1" font-size="6.1" fill="#484848" textLength="104.2" lengthAdjust="spacingAndGlyphs" >99999AutoForms---CreateAndAddCarOwne</text>
<rect x="582.9" y="220.62" width="7" height="7" fill="#f6f6f6" stroke="#b8b8b8" stroke-width="0.5"/><rect x="583.80" y="221.53" width="3.8" height="3.8" fill="#fbcf90"/>
<text x="590.8" y="225.825" font-size="6.1" fill="#484848" textLength="71.8" lengthAdjust="spacingAndGlyphs" >99999AutoForms---DeleteThis</text>
<rect x="582.9" y="229.35" width="7" height="7" fill="#f6f6f6" stroke="#b8b8b8" stroke-width="0.5"/><rect x="583.80" y="230.25" width="3.8" height="3.8" fill="#fbcf90"/>
<text x="590.8" y="234.54999999999998" font-size="6.1" fill="#484848" textLength="71.8" lengthAdjust="spacingAndGlyphs" >99999AutoForms---DeleteThis</text>
<rect x="582.9" y="238.07" width="7" height="7" fill="#f6f6f6" stroke="#b8b8b8" stroke-width="0.5"/><rect x="583.80" y="238.97" width="3.8" height="3.8" fill="#fbcf90"/>
<text x="590.8" y="243.27499999999998" font-size="6.1" fill="#484848" textLength="71.8" lengthAdjust="spacingAndGlyphs" >99999AutoForms---DeleteThis</text>
</g></g>
<rect x="571.1" y="246" width="9.2" height="8.8" fill="#cce8ff"/>
<rect x="572.6" y="248" width="1.6" height="1.6" fill="#555"/><rect x="572.6" y="251.6" width="1.6" height="1.6" fill="#555"/><rect x="575" y="248.3" width="3.6" height="0.6" fill="#7a9ad0"/><rect x="575" y="251.9" width="3.6" height="0.6" fill="#7a9ad0"/><rect x="575" y="249.6" width="3.6" height="0.6" fill="#7a9ad0"/><rect x="575" y="253.1" width="3.6" height="0.6" fill="#7a9ad0"/>
<path d="M582.2 250 L583.5 246.6 L584.8 250" fill="none" stroke="#3a6ad0" stroke-width="0.6"/><path d="M582.4 251 L584.6 251 L582.4 254 L584.6 254" fill="none" stroke="#c04040" stroke-width="0.6"/><rect x="586.4" y="247" width="1" height="6" fill="#333"/><path d="M585.6 252.4 L586.9 254.4 L588.2 252.4 Z" fill="#333"/>
<rect x="590.9" y="247" width="0.6" height="8" fill="#b0b0b0"/>
<rect x="594" y="247" width="6.8" height="7" fill="#d8d8d8" stroke="#c8c8c8" stroke-width="0.4"/>
<rect x="570.3" y="255.8" width="229.7" height="189.4" fill="#ffffff" stroke="#b8b8b8" stroke-width="0.6"/>
<rect x="570.6" y="256.2" width="229.4" height="8" fill="#f0f0f0"/>
<rect x="570.6" y="264.2" width="9" height="23" fill="#f0f0f0"/>
<rect x="579.6" y="264.2" width="102" height="7.8" fill="#f0f0f0"/>
<path d="M573.4 259.4 L575 261 L576.6 259.4" fill="none" stroke="#333" stroke-width="0.6"/>
<text x="581" y="262.2" font-size="4.6" fill="#202020" textLength="18.5" lengthAdjust="spacingAndGlyphs" font-weight="bold">Diagram</text>
<rect x="579.6" y="272" width="220.4" height="0.5" fill="#ececec"/>
<rect x="579.6" y="279.6" width="220.4" height="0.5" fill="#ececec"/>
<rect x="579.6" y="287.2" width="220.4" height="0.5" fill="#ececec"/>
<rect x="681.4" y="264.2" width="0.5" height="23" fill="#ececec"/>
<text x="581" y="269.8" font-size="4.6" fill="#303030" textLength="12" lengthAdjust="spacingAndGlyphs" >Color</text>
<text x="581" y="277.4" font-size="4.6" fill="#303030" textLength="14" lengthAdjust="spacingAndGlyphs" >Height</text>
<text x="581" y="285.0" font-size="4.6" fill="#303030" textLength="12.5" lengthAdjust="spacingAndGlyphs" >Width</text>
<rect x="682.2" y="265" width="8.2" height="6" fill="#ffff00" stroke="#555" stroke-width="0.5"/>
<text x="694" y="269.9" font-size="4.6" fill="#303030" textLength="33" lengthAdjust="spacingAndGlyphs" >200, 255, 255, 0</text>
<text x="682.6" y="277.5" font-size="4.6" fill="#303030" textLength="7.4" lengthAdjust="spacingAndGlyphs" >131</text>
<text x="682.6" y="285.1" font-size="4.6" fill="#303030" textLength="7.8" lengthAdjust="spacingAndGlyphs" >462</text>
<rect x="570.5" y="446.6" width="229.5" height="24.2" fill="#f0f0f0" stroke="#a8a8a8" stroke-width="0.6"/>
<text x="572.6" y="452.9" font-size="4.6" fill="#202020" textLength="11.8" lengthAdjust="spacingAndGlyphs" font-weight="bold">Color</text>
<text x="572.6" y="460.4" font-size="4.4" fill="#303030" textLength="36" lengthAdjust="spacingAndGlyphs" >placednote.color</text></svg>
</body></html>
